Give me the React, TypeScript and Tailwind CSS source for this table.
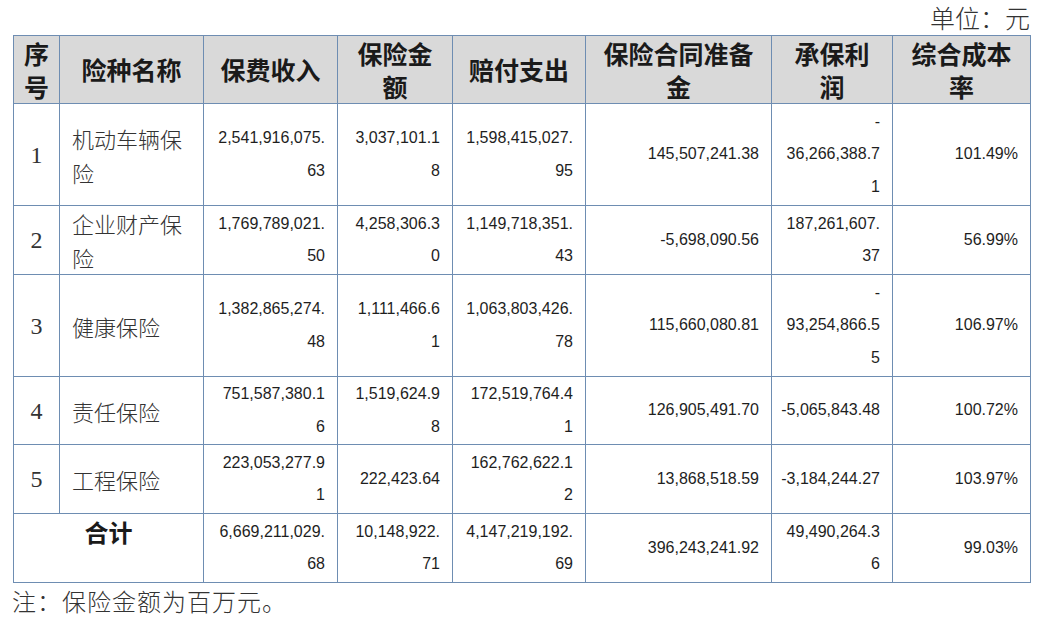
import React from "react";

const CJK = "'Noto Sans CJK SC', 'Noto Sans', sans-serif";
const NUM = "'Liberation Sans', Arial, sans-serif";
const SERIF = "'Liberation Serif', 'Noto Sans CJK SC', serif";

type Row = {
  seq: string;
  name: string[];
  cells: string[][];
  h: string;
};

const rows: Row[] = [
  {
    seq: "1",
    name: ["机动车辆保", "险"],
    cells: [["2,541,916,075.", "63"], ["3,037,101.1", "8"], ["1,598,415,027.", "95"], ["145,507,241.38"], ["-", "36,266,388.7", "1"], ["101.49%"]],
    h: "h-[102px]",
  },
  {
    seq: "2",
    name: ["企业财产保", "险"],
    cells: [["1,769,789,021.", "50"], ["4,258,306.3", "0"], ["1,149,718,351.", "43"], ["-5,698,090.56"], ["187,261,607.", "37"], ["56.99%"]],
    h: "h-[69px]",
  },
  {
    seq: "3",
    name: ["健康保险"],
    cells: [["1,382,865,274.", "48"], ["1,111,466.6", "1"], ["1,063,803,426.", "78"], ["115,660,080.81"], ["-", "93,254,866.5", "5"], ["106.97%"]],
    h: "h-[102px]",
  },
  {
    seq: "4",
    name: ["责任保险"],
    cells: [["751,587,380.1", "6"], ["1,519,624.9", "8"], ["172,519,764.4", "1"], ["126,905,491.70"], ["-5,065,843.48"], ["100.72%"]],
    h: "h-[68px]",
  },
  {
    seq: "5",
    name: ["工程保险"],
    cells: [["223,053,277.9", "1"], ["222,423.64"], ["162,762,622.1", "2"], ["13,868,518.59"], ["-3,184,244.27"], ["103.97%"]],
    h: "h-[69px]",
  },
];

const total = [["6,669,211,029.", "68"], ["10,148,922.", "71"], ["4,147,219,192.", "69"], ["396,243,241.92"], ["49,490,264.3", "6"], ["99.03%"]];

const bd = "border border-[#6e8db2]";

function Lines({ lines }: { lines: string[] }) {
  return (
    <>
      {lines.map((l, i) => (
        <div key={i}>{l}</div>
      ))}
    </>
  );
}

function NumCell({ lines }: { lines: string[] }) {
  return (
    <td
      className={`${bd} p-0 pr-[12px] text-right align-middle text-[16px] leading-[32.5px] text-[#1e1e1e]`}
      style={{ fontFamily: NUM }}
    >
      <Lines lines={lines} />
    </td>
  );
}

export default function App() {
  const headers: string[][] = [
    ["序", "号"],
    ["险种名称"],
    ["保费收入"],
    ["保险金", "额"],
    ["赔付支出"],
    ["保险合同准备", "金"],
    ["承保利", "润"],
    ["综合成本", "率"],
  ];
  return (
    <div className="w-[1044px] h-[620px] bg-white overflow-hidden text-[#1e1e1e]">
      <div
        className="h-[35px] flex items-center justify-end pr-[14px] text-[25px] text-[#333] font-light"
        style={{ fontFamily: CJK }}
      >
        单位：元
      </div>
      <table className="ml-[13px] w-[1017px] table-fixed border-collapse">
        <colgroup>
          <col className="w-[46px]" />
          <col className="w-[144px]" />
          <col className="w-[134px]" />
          <col className="w-[115px]" />
          <col className="w-[133px]" />
          <col className="w-[186px]" />
          <col className="w-[121px]" />
          <col className="w-[138px]" />
        </colgroup>
        <thead>
          <tr className="bg-[#d9d9d9]">
            {headers.map((h, i) => (
              <th
                key={i}
                className={`${bd} h-[68px] p-0 text-center align-middle text-[25px] leading-[33px] font-bold text-[#1a1a1a]`}
                style={{ fontFamily: CJK }}
              >
                <Lines lines={h} />
              </th>
            ))}
          </tr>
        </thead>
        <tbody>
          {rows.map((r) => (
            <tr key={r.seq} className={r.h}>
              <td
                className={`${bd} p-0 text-center align-middle text-[24px] text-[#333]`}
                style={{ fontFamily: SERIF }}
              >
                {r.seq}
              </td>
              <td
                className={`${bd} p-0 pl-[12px] text-left align-middle text-[22px] leading-[34px] text-[#333] font-light`}
                style={{ fontFamily: CJK }}
              >
                <Lines lines={r.name} />
              </td>
              {r.cells.map((c, i) => (
                <NumCell key={i} lines={c} />
              ))}
            </tr>
          ))}
          <tr className="h-[69px]">
            <td
              colSpan={2}
              className={`${bd} p-0 pt-[2px] text-center align-top text-[24px] leading-[32px] font-bold text-[#1a1a1a]`}
              style={{ fontFamily: CJK }}
            >
              合计
            </td>
            {total.map((c, i) => (
              <NumCell key={i} lines={c} />
            ))}
          </tr>
        </tbody>
      </table>
      <div
        className="h-[36px] pl-[12px] flex items-center text-[24px] tracking-[1px] text-[#333] font-light"
        style={{ fontFamily: CJK }}
      >
        注：保险金额为百万元。
      </div>
    </div>
  );
}
